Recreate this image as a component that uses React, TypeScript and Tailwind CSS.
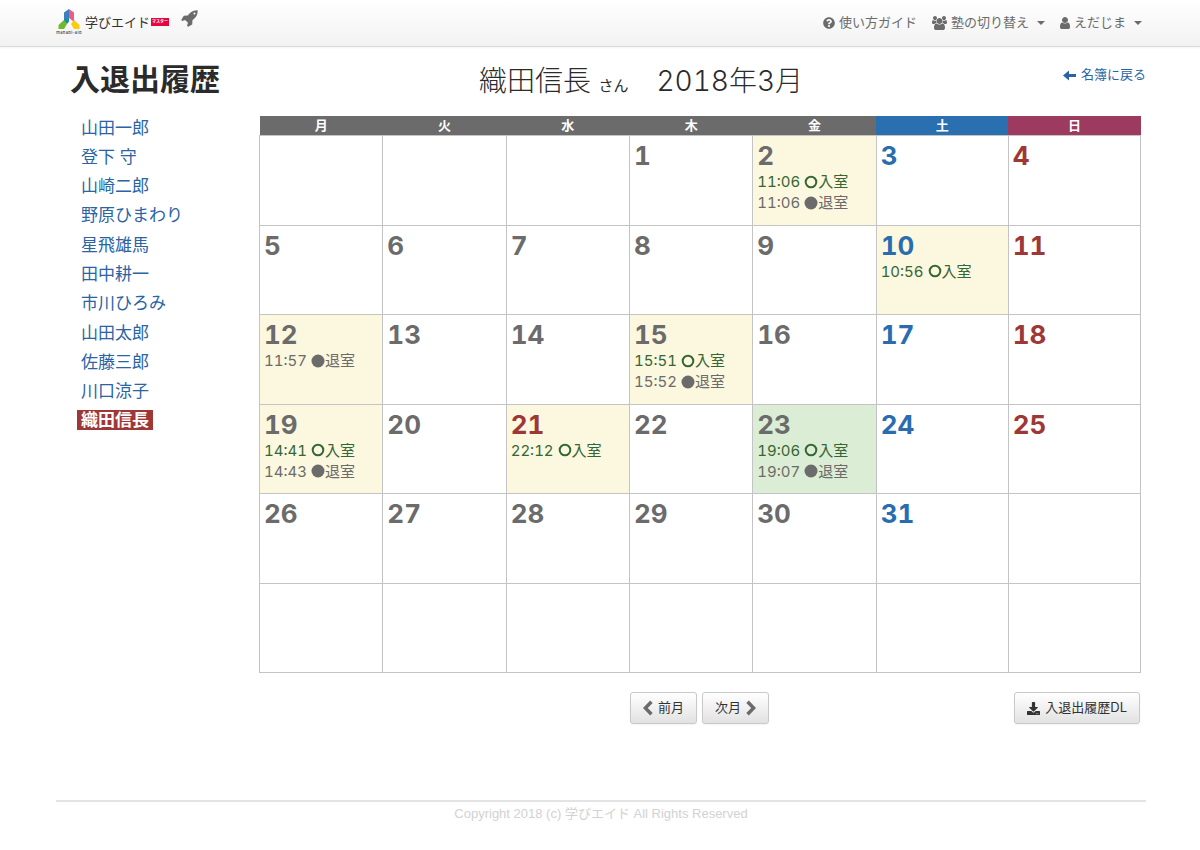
import clsx from "clsx";
import { FaDownload, FaQuestionCircle } from "react-icons/fa";

interface Entry {
    time: string;
    type: "in" | "out";
}

const STUDENTS = [
    "山田一郎",
    "登下 守",
    "山崎二郎",
    "野原ひまわり",
    "星飛雄馬",
    "田中耕一",
    "市川ひろみ",
    "山田太郎",
    "佐藤三郎",
    "川口涼子",
    "織田信長",
];

const CURRENT = "織田信長";
const WEEKDAYS = ["月", "火", "水", "木", "金", "土", "日"];
const FIRST_OFFSET = 3;
const DAYS_IN_MONTH = 31;
const TODAY = 23;
const HOLIDAYS = [21];

const ENTRIES: Record<number, Entry[]> = {
    2: [{ time: "11:06", type: "in" }, { time: "11:06", type: "out" }],
    10: [{ time: "10:56", type: "in" }],
    12: [{ time: "11:57", type: "out" }],
    15: [{ time: "15:51", type: "in" }, { time: "15:52", type: "out" }],
    19: [{ time: "14:41", type: "in" }, { time: "14:43", type: "out" }],
    21: [{ time: "22:12", type: "in" }],
    23: [{ time: "19:06", type: "in" }, { time: "19:07", type: "out" }],
};

function Logo() {
    return (
        <a href="#" className="flex items-center gap-[2px] text-[#333]">
            <span className="flex w-7 flex-col items-center">
                <svg viewBox="0 0 22 22" className="h-[22px] w-[22px]">
                    <path d="M6 4.500 11 1v9l-5 4z" fill="#3b7fc0" />
                    <path d="M11 1l5 3.500V14l-5-4z" fill="#ee5a8b" />
                    <path d="M6 11v3l3 2 2-2.500V10z" fill="#168fa0" />
                    <path d="M6 12 .5 17v4H6l3-5z" fill="#6fb92c" />
                    <path d="m16 12 5.500 5v4H16l-3-5z" fill="#fccb0c" />
                </svg>
                <span className="text-[4px] leading-[6px] font-medium tracking-widest">manabi-aid</span>
            </span>
            <span className="flex items-center gap-px text-[13px] leading-5">
                学びエイド
                <span className="bg-[#e5063c] px-px text-[4px] leading-2 font-bold text-white">マスター</span>
            </span>
        </a>
    );
}

function RocketIcon() {
    return (
        <svg viewBox="0 0 1792 1792" fill="currentColor" className="h-[18px] w-[18px]">
            <path d="M1440 448q0-40-28-68t-68-28-68 28-28 68 28 68 68 28 68-28 28-68zm224-288q0 249-75.500 430.500t-253.500 360.500q-81 80-195 176l-20 379q-2 16-16 26l-384 224q-7 4-16 4-12 0-23-9l-64-64q-13-14-8-32l85-276-281-281-276 85q-3 1-9 1-14 0-23-9l-64-64q-17-19-5-39l224-384q10-14 26-16l379-20q96-114 176-195 188-187 358-258t431-71q14 0 24 9.500t10 22.500z" />
        </svg>
    );
}

function GroupIcon() {
    return (
        <svg viewBox="-64 0 1920 1792" fill="currentColor" className="h-[14px] w-[15px]">
            <path d="M529 896q-162 5-265 128h-134q-82 0-138-40.500t-56-118.500q0-353 124-353 6 0 43.500 21t97.500 42.500 119 21.500q67 0 133-23-5 37-5 66 0 139 81 256zm1071 637q0 120-73 189.500t-194 69.500h-874q-121 0-194-69.500t-73-189.500q0-53 3.500-103.500t14-109 26.500-108.500 43-97.500 62-81 85.500-53.500 111.500-20q10 0 43 21.500t73 48 107 48 135 21.500 135-21.500 107-48 73-48 43-21.500q61 0 111.500 20t85.500 53.500 62 81 43 97.500 26.500 108.500 14 109 3.500 103.500zm-1024-1277q0 106-75 181t-181 75-181-75-75-181 75-181 181-75 181 75 75 181zm704 384q0 159-112.500 271.500t-271.500 112.500-271.500-112.500-112.500-271.500 112.500-271.500 271.500-112.500 271.500 112.500 112.500 271.500zm576 225q0 78-56 118.500t-138 40.500h-134q-103-123-265-128 81-117 81-256 0-29-5-66 66 23 133 23 59 0 119-21.500t97.500-42.500 43.500-21q124 0 124 353zm-128-609q0 106-75 181t-181 75-181-75-75-181 75-181 181-75 181 75 75 181z" />
        </svg>
    );
}

function UserIcon() {
    return (
        <svg viewBox="256 128 1280 1536" fill="currentColor" className="h-3 w-[10px]">
            <path d="M1536 1399q0 109-62.500 187t-150.500 78h-854q-88 0-150.500-78t-62.500-187q0-85 8.500-160.500t31.500-152 58.500-131 94-89 134.500-34.500q131 128 313 128t313-128q76 0 134.500 34.500t94 89 58.500 131 31.500 152 8.500 160.500zm-256-887q0 159-112.500 271.500t-271.500 112.500-271.500-112.500-112.500-271.500 112.500-271.500 271.500-112.500 271.500 112.500 112.500 271.500z" />
        </svg>
    );
}

function Caret() {
    return (
        <svg viewBox="0 0 8 4" fill="currentColor" className="ml-1 h-1 w-2">
            <path d="M0 0h8L4 4z" />
        </svg>
    );
}

function Chevron({ flip = false }: { flip?: boolean }) {
    return (
        <svg viewBox="0 0 10 16" fill="#6b6b6b" className={clsx("h-4 w-[10px]", flip && "rotate-180")}>
            <path d="M7.200.5 9.700 3 4.800 8l4.900 5-2.500 2.500L0 8z" />
        </svg>
    );
}

function Header() {
    return (
        <header className="h-[47px] border-b border-[#d9d9d9] bg-linear-to-b from-white to-[#f2f2f2] pr-[58px] pl-[55px] shadow-xs">
            <div className="flex h-[46px] items-center justify-between text-[#6b6b6b]">
                <div className="flex items-center gap-3 pb-[2px]">
                    <Logo />
                    <a href="#" aria-label="ロケット" className="pb-2">
                        <RocketIcon />
                    </a>
                </div>
                <nav className="flex items-center gap-[15px] text-[13px]">
                    <a href="#" className="flex items-center gap-1">
                        <FaQuestionCircle size={12} />
                        使い方ガイド
                    </a>
                    <button type="button" className="flex items-center gap-1">
                        <GroupIcon />
                        塾の切り替え
                        <Caret />
                    </button>
                    <button type="button" className="flex items-center gap-1">
                        <UserIcon />
                        えだじま
                        <Caret />
                    </button>
                </nav>
            </div>
        </header>
    );
}

function StudentList() {
    return (
        <ul className="grid h-[322px] auto-rows-fr pl-[21px] text-[17px] leading-5 text-[#2a64a5]">
            {STUDENTS.map((name) => (
                <li key={name} className="flex items-center">
                    <a
                        href="#"
                        aria-current={name === CURRENT ? "page" : undefined}
                        className={clsx("px-1", name === CURRENT && "bg-[#9d3836] font-bold text-white")}
                    >
                        {name}
                    </a>
                </li>
            ))}
        </ul>
    );
}

function EntryRow({ time, type }: Entry) {
    return (
        <li className={clsx("flex items-center", type === "in" ? "text-[#356635]" : "text-[#6b6b6b]")}>
            <span className="mr-1 tabular-nums">{time}</span>
            <svg viewBox="0 0 14 14" className="h-[14px] w-[14px]">
                {type === "in" ? (
                    <circle cx="7" cy="7" r="5.300" fill="none" stroke="currentColor" strokeWidth="2" />
                ) : (
                    <circle cx="7" cy="7" r="6.500" fill="currentColor" />
                )}
            </svg>
            {type === "in" ? "入室" : "退室"}
        </li>
    );
}

function DayCell({ day, column }: { day: number | null; column: number }) {
    const entries = day ? ENTRIES[day] : undefined;
    const isRed = column === 6 || (day !== null && HOLIDAYS.includes(day));

    return (
        <td
            className={clsx(
                "h-[89px] border border-[#c4c4c4] px-1 pt-1 align-top",
                day === TODAY ? "bg-[#dbedd4]" : entries && "bg-[#fcf7df]"
            )}
        >
            {day && (
                <div
                    className={clsx(
                        "text-[26px] leading-[31px] font-bold tabular-nums",
                        isRed ? "text-[#9d3836]" : column === 5 ? "text-[#2a6cb0]" : "text-[#6b6b6b]"
                    )}
                >
                    {day}
                </div>
            )}
            {entries && (
                <ul className="text-[15px] leading-[21px]">
                    {entries.map((entry) => (
                        <EntryRow key={entry.time + entry.type} {...entry} />
                    ))}
                </ul>
            )}
        </td>
    );
}

function Calendar() {
    const weeks = Array.from({ length: 6 }, (_, week) =>
        Array.from({ length: 7 }, (_, column) => {
            const day = week * 7 + column - FIRST_OFFSET + 1;
            return day >= 1 && day <= DAYS_IN_MONTH ? day : null;
        })
    );

    return (
        <table className="h-[557px] w-full table-fixed border-collapse">
            <thead>
                <tr>
                    {WEEKDAYS.map((name, i) => (
                        <th
                            key={name}
                            scope="col"
                            className={clsx(
                                "h-[19px] p-0 text-[13px] leading-[19px] font-bold text-white",
                                i < 5 && "w-[14%] bg-[#6b6b6b]",
                                i === 5 && "bg-[#2a6fb0]",
                                i === 6 && "bg-[#9d3a60]"
                            )}
                        >
                            {name}
                        </th>
                    ))}
                </tr>
            </thead>
            <tbody>
                {weeks.map((week, i) => (
                    <tr key={i}>
                        {week.map((day, column) => (
                            <DayCell key={column} day={day} column={column} />
                        ))}
                    </tr>
                ))}
            </tbody>
        </table>
    );
}

const buttonClass =
    "flex h-8 items-center gap-[5px] rounded-[3px] border border-[#c9c9c9] bg-linear-to-b from-white to-[#e2e2e2] px-3 text-[13px] text-[#333] shadow-xs";

export default function App() {
    return (
        <div className="min-h-screen bg-white font-[Inter,'Noto_Sans_CJK_JP',sans-serif] text-[#2b2b2b]">
            <Header />
            <div className="pr-[54px] pl-14">
                <div className="flex h-[66px]">
                    <h1 className="w-[203px] pt-3 pl-[14px] text-[30px] leading-10 font-bold">入退出履歴</h1>
                    <h2 className="flex-1 pt-[14px] text-center text-[28px] leading-10 font-light tabular-nums">
                        織田信長 <small className="text-[15px] font-normal">さん</small>
                        {"　"}2018年3月
                    </h2>
                    <div className="flex w-[123px] justify-end pt-[18px]">
                        <a href="#" className="flex h-5 items-center gap-[5px] text-[13px] text-[#2a64a5]">
                            <svg viewBox="0 0 13 11" fill="currentColor" className="h-[11px] w-[13px]">
                                <path d="M6 .5V4h7v3H6v3.500L0 5.500z" />
                            </svg>
                            名簿に戻る
                        </a>
                    </div>
                </div>
                <div className="flex">
                    <aside className="w-[203px] shrink-0">
                        <StudentList />
                    </aside>
                    <main className="flex-1 pt-[3px] pr-[5px]">
                        <Calendar />
                        <div className="grid grid-cols-[1fr_auto_1fr] pt-[19px] pr-px">
                            <div className="col-start-2 flex gap-[5px]">
                                <button type="button" className={buttonClass}>
                                    <Chevron />
                                    前月
                                </button>
                                <button type="button" className={buttonClass}>
                                    次月
                                    <Chevron flip />
                                </button>
                            </div>
                            <button type="button" className={clsx(buttonClass, "justify-self-end")}>
                                <FaDownload size={13} />
                                入退出履歴DL
                            </button>
                        </div>
                    </main>
                </div>
                <footer className="mt-[76px] border-t-2 border-[#e3e3e3] pt-[2px] text-center font-['Liberation_Sans','Noto_Sans_CJK_JP',sans-serif] text-[13px] leading-5 text-[#d2d2d2]">
                    Copyright 2018 (c) 学びエイド All Rights Reserved
                </footer>
            </div>
        </div>
    );
}
